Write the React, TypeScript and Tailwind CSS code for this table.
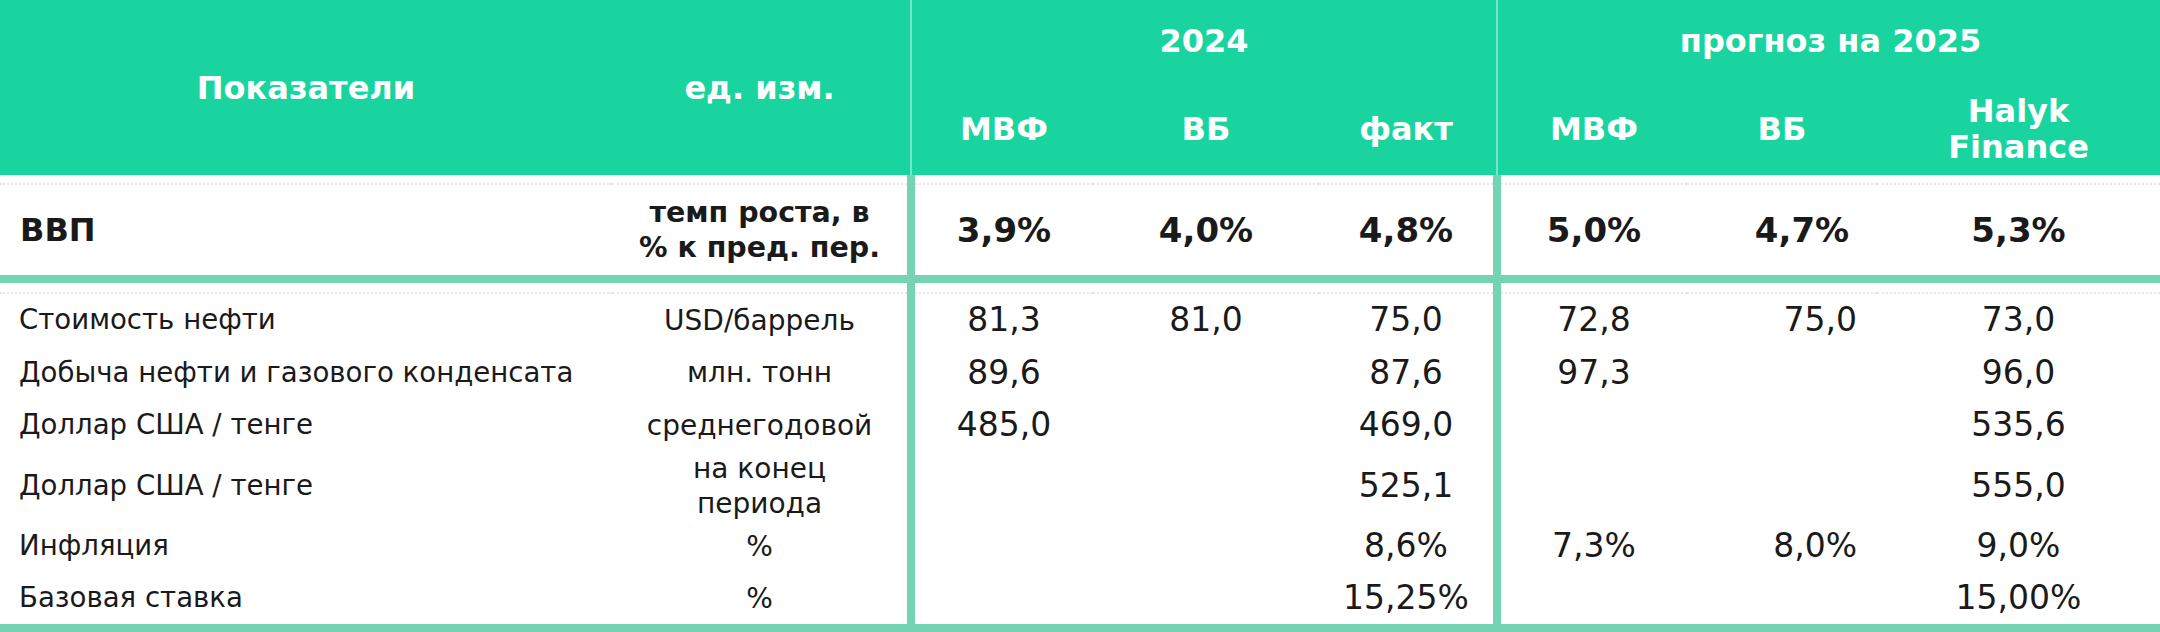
const cols =
  'grid grid-cols-[612px_295px_8px_178px_226px_174px_8px_186px_190px_283px]';

type Row = {
  label: string;
  unit: string[];
  h: string;
  v: (string | null)[];
};

const rows: Row[] = [
  { label: 'Стоимость нефти', unit: ['USD/баррель'], h: 'h-[52px]', v: ['81,3', '81,0', '75,0', '72,8', '75,0', '73,0'] },
  { label: 'Добыча нефти и газового конденсата', unit: ['млн. тонн'], h: 'h-[53px]', v: ['89,6', null, '87,6', '97,3', null, '96,0'] },
  { label: 'Доллар США / тенге', unit: ['среднегодовой'], h: 'h-[52px]', v: ['485,0', null, '469,0', null, null, '535,6'] },
  { label: 'Доллар США / тенге', unit: ['на конец', 'периода'], h: 'h-[69px]', v: [null, null, '525,1', null, null, '555,0'] },
  { label: 'Инфляция', unit: ['%'], h: 'h-[52px]', v: [null, null, '8,6%', '7,3%', '8,0%', '9,0%'] },
  { label: 'Базовая ставка', unit: ['%'], h: 'h-[52px]', v: [null, null, '15,25%', null, null, '15,00%'] },
];

const gdp = ['3,9%', '4,0%', '4,8%', '5,0%', '4,7%', '5,3%'];

const Bar = () => <div className="bg-[#74d3b2]" />;

const HeadBar = () => (
  <div className="row-span-2 flex justify-center">
    <div className="w-[2px] bg-white/40" />
  </div>
);

// thin dotted rule under the header and under the separator
const Dotted = ({ h }: { h: string }) => {
  const cell = `${h} border-b-2 border-dotted border-[#e6e6e6]`;
  return (
    <div className={cols}>
      <div className={cell} />
      <div className={cell} />
      <Bar />
      <div className={cell} />
      <div className={cell} />
      <div className={cell} />
      <Bar />
      <div className={cell} />
      <div className={cell} />
      <div className={cell} />
    </div>
  );
};

const Value = ({ v, i, bold }: { v: string | null; i: number; bold?: boolean }) => {
  // the World Bank 2025 column sits right of its header
  const shift =
    i === 4 ? (bold ? 'justify-center pl-[40px]' : 'justify-end pr-[20px]') : 'justify-center';
  return <div className={`flex items-center ${shift}`}>{v}</div>;
};

export default function App() {
  return (
    <div className="w-[2160px] h-[632px] bg-white font-['DejaVu_Sans',sans-serif] text-[#1a1a1a]">
      {/* ── Header ─────────────────────────────── */}
      <div className={`${cols} grid-rows-[82px_93px] bg-[#19d49f] text-white font-bold text-[32px]`}>
        <div className="row-span-2 flex items-center justify-center">Показатели</div>
        <div className="row-span-2 flex items-center justify-center">ед. изм.</div>
        <HeadBar />
        <div className="col-span-3 flex items-center justify-center">2024</div>
        <HeadBar />
        <div className="col-span-3 flex items-center justify-center">прогноз на 2025</div>
        <div className="flex items-center justify-center">МВФ</div>
        <div className="flex items-center justify-center">ВБ</div>
        <div className="flex items-center justify-center">факт</div>
        <div className="flex items-center justify-center">МВФ</div>
        <div className="flex items-center justify-center">ВБ</div>
        <div className="flex flex-col items-center justify-center text-center leading-[36px]">
          <span>Halyk</span>
          <span>Finance</span>
        </div>
      </div>

      {/* ── GDP row ────────────────────────────── */}
      <Dotted h="h-[10px]" />
      <div className={`${cols} h-[90px] font-bold`}>
        <div className="flex items-center pl-[20px] text-[32px]">ВВП</div>
        <div className="flex flex-col items-center justify-center text-center text-[28.5px] leading-[35px]">
          <span>темп роста, в</span>
          <span>% к пред. пер.</span>
        </div>
        <Bar />
        {gdp.slice(0, 3).map((v, i) => (
          <div key={i} className="text-[34px] grid">
            <Value v={v} i={i} bold />
          </div>
        ))}
        <Bar />
        {gdp.slice(3).map((v, i) => (
          <div key={i} className="text-[34px] grid">
            <Value v={v} i={i + 3} bold />
          </div>
        ))}
      </div>

      <div className="h-[8px] bg-[#74d3b2]" />

      {/* ── Indicators ─────────────────────────── */}
      <Dotted h="h-[11px]" />
      {rows.map((r, ri) => (
        <div key={ri} className={`${cols} ${r.h}`}>
          <div className="flex items-center pl-[19px] text-[27.6px]">{r.label}</div>
          <div className="flex flex-col items-center justify-center text-center text-[28px] leading-[35px]">
            {r.unit.map((u) => (
              <span key={u}>{u}</span>
            ))}
          </div>
          <Bar />
          {r.v.slice(0, 3).map((v, i) => (
            <div key={i} className="grid text-[33px]">
              <Value v={v} i={i} />
            </div>
          ))}
          <Bar />
          {r.v.slice(3).map((v, i) => (
            <div key={i} className="grid text-[33px]">
              <Value v={v} i={i + 3} />
            </div>
          ))}
        </div>
      ))}

      <div className="h-[8px] bg-[#74d3b2]" />
    </div>
  );
}
